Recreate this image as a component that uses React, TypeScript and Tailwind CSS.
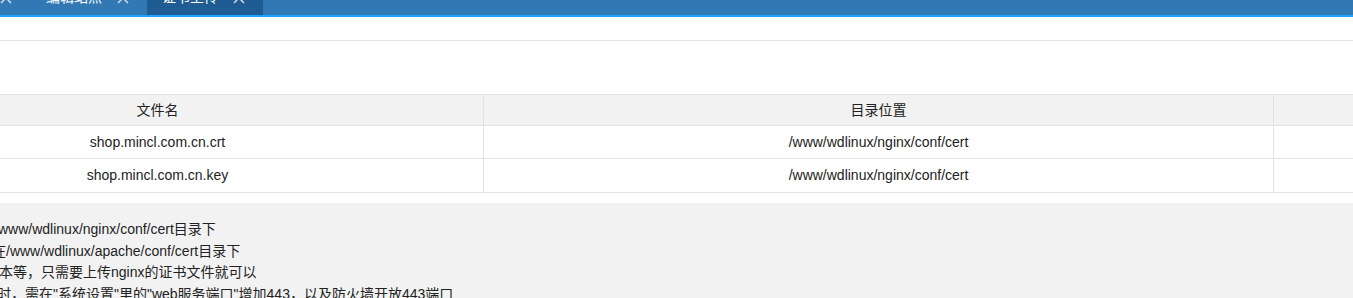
import React from "react";

const tabs = [
  { label: "", active: false, w: "w-[30px]" },
  { label: "编辑站点", active: false, w: "w-[117px]" },
  { label: "证书上传", active: true, w: "w-[116px]" },
];

const rows = [
  { name: "shop.mincl.com.cn.crt", path: "/www/wdlinux/nginx/conf/cert", h: "h-[33px]" },
  { name: "shop.mincl.com.cn.key", path: "/www/wdlinux/nginx/conf/cert", h: "h-[34px]" },
];

const notes = [
  { text: "www/wdlinux/nginx/conf/cert目录下", cls: "-ml-[2px]" },
  { text: "在/www/wdlinux/apache/conf/cert目录下", cls: "-ml-[8px]" },
  { text: "本等，只需要上传nginx的证书文件就可以", cls: "-ml-[1px]" },
  { text: "时，需在\"系统设置\"里的\"web服务端口\"增加443，以及防火墙开放443端口", cls: "-ml-[3px]" },
];

const Close = () => (
  <svg width="12" height="12" viewBox="0 0 12 12" className="shrink-0">
    <path d="M1 1 L11 11 M11 1 L1 11" stroke="#d6e4f2" strokeWidth="1.4" />
  </svg>
);

export default function App() {
  return (
    <div
      className="w-[1353px] h-[298px] overflow-hidden bg-white text-[14px] text-[#333]"
      style={{ fontFamily: '"Liberation Sans", Arial, "Noto Sans CJK SC", sans-serif' }}
    >
      {/* tab bar, scrolled so only its bottom shows */}
      <div className="h-[17px] bg-[#3278b5] border-b-2 border-[#1ea4ff] flex overflow-hidden">
        {tabs.map((t, i) => (
          <div
            key={i}
            className={`${t.w} shrink-0 flex items-start justify-end gap-[15px] pr-[18px] ${
              t.active ? "bg-[#1e5c93]" : ""
            }`}
          >
            {t.label && (
              <span className="text-white leading-[14px] -mt-[10px]">{t.label}</span>
            )}
            <span className="-mt-[8px]">
              <Close />
            </span>
          </div>
        ))}
      </div>

      {/* toolbar strip */}
      <div className="h-[24px] border-b border-[#e2e2e2]" />

      <div className="pt-[53px] pb-[10px]">
        <table className="-ml-[169px] w-[1600px] border-collapse table-fixed text-[#222]">
          <colgroup>
            <col className="w-[652px]" />
            <col className="w-[790px]" />
            <col />
          </colgroup>
          <thead>
            <tr className="bg-[#f2f2f2] h-[31px]">
              <th className="border border-[#e2e2e2] font-normal">文件名</th>
              <th className="border border-[#e2e2e2] font-normal">目录位置</th>
              <th className="border border-[#e2e2e2] font-normal"></th>
            </tr>
          </thead>
          <tbody>
            {rows.map((r) => (
              <tr key={r.name} className={r.h}>
                <td className="border border-[#e2e2e2] text-center">{r.name}</td>
                <td className="border border-[#e2e2e2] text-center">{r.path}</td>
                <td className="border border-[#e2e2e2]"></td>
              </tr>
            ))}
          </tbody>
        </table>
      </div>

      <div className="bg-[#f2f2f2] pt-[16px] h-[200px] text-[#222]">
        {notes.map((n, i) => (
          <div key={i} className={`whitespace-nowrap leading-[21.5px] ${n.cls}`}>
            {n.text}
          </div>
        ))}
      </div>
    </div>
  );
}
